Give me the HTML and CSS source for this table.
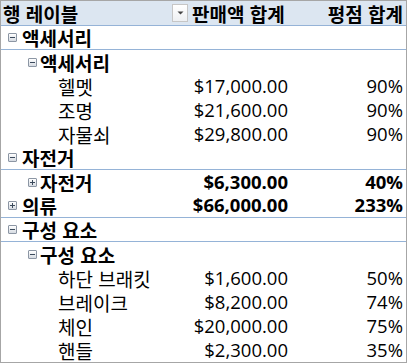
FILE: index.html
```html
<!DOCTYPE html>
<html lang="ko">
<head>
<meta charset="utf-8">
<link rel="stylesheet" href="styles.css">
</head>
<body>
<div class="pivot">
  <div class="row head">
    <div class="c1"><span class="lbl">행 레이블</span><span class="dd"><svg width="7" height="4" viewBox="0 0 7 4"><path d="M0.5 0.5h6L3.5 3.5z" fill="#444"/></svg></span></div>
    <div class="c2">판매액 합계</div>
    <div class="c3">평점 합계</div>
  </div>
  <div class="row l0 bold"><div class="c1"><span class="tog minus"></span>액세서리</div><div class="c2"></div><div class="c3"></div></div>
  <div class="row l1 bold"><div class="c1"><span class="tog minus"></span>액세서리</div><div class="c2"></div><div class="c3"></div></div>
  <div class="row l2"><div class="c1">헬멧</div><div class="c2 num">$17,000.00</div><div class="c3 num">90%</div></div>
  <div class="row l2"><div class="c1">조명</div><div class="c2 num">$21,600.00</div><div class="c3 num">90%</div></div>
  <div class="row l2"><div class="c1">자물쇠</div><div class="c2 num">$29,800.00</div><div class="c3 num">90%</div></div>
  <div class="row l0 bold"><div class="c1"><span class="tog minus"></span>자전거</div><div class="c2"></div><div class="c3"></div></div>
  <div class="row l1 bold"><div class="c1"><span class="tog plus"></span>자전거</div><div class="c2 num">$6,300.00</div><div class="c3 num">40%</div></div>
  <div class="row l0 bold"><div class="c1"><span class="tog plus"></span>의류</div><div class="c2 num">$66,000.00</div><div class="c3 num">233%</div></div>
  <div class="row l0 bold"><div class="c1"><span class="tog minus"></span>구성 요소</div><div class="c2"></div><div class="c3"></div></div>
  <div class="row l1 bold"><div class="c1"><span class="tog minus"></span>구성 요소</div><div class="c2"></div><div class="c3"></div></div>
  <div class="row l2"><div class="c1">하단 브래킷</div><div class="c2 num">$1,600.00</div><div class="c3 num">50%</div></div>
  <div class="row l2"><div class="c1">브레이크</div><div class="c2 num">$8,200.00</div><div class="c3 num">74%</div></div>
  <div class="row l2"><div class="c1">체인</div><div class="c2 num">$20,000.00</div><div class="c3 num">75%</div></div>
  <div class="row l2"><div class="c1">핸들</div><div class="c2 num">$2,300.00</div><div class="c3 num">35%</div></div>
</div>
</body>
</html>
```
FILE: styles.css
```css
html, body {
  margin: 0;
  padding: 0;
  background: #fff;
}
.pivot {
  width: 405px;
  border: 1px solid #a6a6a6;
  font-family: "Noto Sans CJK KR", "Open Sans", sans-serif;
  font-size: 19px;
  color: #000;
  line-height: 1;
}
.row {
  display: grid;
  grid-template-columns: 189px 102px 1fr;
  height: 24px;
  box-sizing: border-box;
  align-items: center;
}
.head {
  background: #dce6f1;
  border-bottom: 1px solid #95b3d7;
  height: 25px;
  font-weight: bold;
}
.l0 {
  border-bottom: 1px solid #95b3d7;
}
.bold {
  font-weight: bold;
}
.c1 {
  display: flex;
  align-items: center;
  white-space: nowrap;
}
.head .c1 {
  padding-left: 2px;
  justify-content: space-between;
}
.head .c2 {
  padding-left: 2px;
  white-space: nowrap;
  overflow: visible;
}
.head .c3 {
  text-align: right;
  padding-right: 3px;
}
.dd {
  width: 14px;
  height: 16px;
  border: 1px solid #c6c6c6;
  background: linear-gradient(#ffffff, #eef0f3);
  display: flex;
  align-items: center;
  justify-content: center;
  margin-right: 2px;
}
.l0 .c1 {
  padding-left: 7px;
}
.l1 .c1 {
  padding-left: 27px;
}
.l2 .c1 {
  padding-left: 57px;
}
.tog {
  position: relative;
  width: 7px;
  height: 7px;
  border: 1px solid #8c96a4;
  border-radius: 1px;
  background: linear-gradient(#ffffff, #d6dbe2);
  margin-right: 5px;
  flex: none;
}
.l1 .tog {
  margin-right: 3px;
}
.tog::before {
  content: "";
  position: absolute;
  left: 1px;
  top: 3px;
  width: 5px;
  height: 1px;
  background: #3b4a5c;
}
.tog.plus::after {
  content: "";
  position: absolute;
  left: 3px;
  top: 1px;
  width: 1px;
  height: 5px;
  background: #3b4a5c;
}
.num {
  font-family: "Open Sans", sans-serif;
  font-size: 18.5px;
  text-align: right;
}
.c2.num {
  padding-right: 4px;
}
.c3.num {
  padding-right: 3px;
}
```
